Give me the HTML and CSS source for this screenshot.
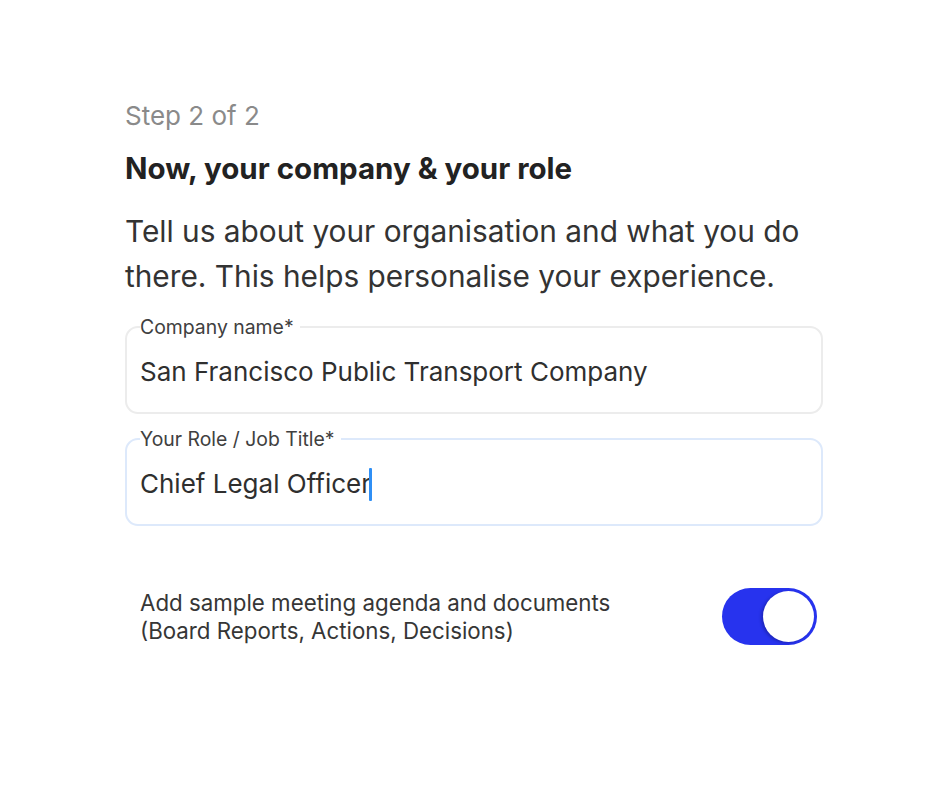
FILE: index.html
```html
<!DOCTYPE html>
<html lang="en">
<head>
  <meta charset="UTF-8" />
  <meta name="viewport" content="width=device-width, initial-scale=1" />
  <title>Onboarding - Step 2</title>
  <link rel="stylesheet" href="styles.css">
</head>
<body>
  <div class="onboarding">
    <div class="step">Step 2 of 2</div>
    <h1 class="title">Now, your company &amp; your role</h1>
    <p class="intro">Tell us about your organisation and what you do there. This helps personalise your experience.</p>

    <fieldset class="field">
      <legend>Company name*</legend>
      <div class="field-value">San Francisco Public Transport Company</div>
    </fieldset>

    <fieldset class="field field-active">
      <legend>Your Role / Job Title*</legend>
      <div class="field-value">Chief Legal Officer<span class="caret"></span></div>
    </fieldset>

    <div class="option-row">
      <div class="option-text">Add sample meeting agenda and documents<br>(Board Reports, Actions, Decisions)</div>
      <div class="toggle on"><span class="knob"></span></div>
    </div>
  </div>
</body>
</html>
```

FILE: styles.css
```css
/* Base */
body {
  margin: 0;
  background: #fff;
  font-family: Inter, "Noto Sans", sans-serif;
  color: #262626;
}

.onboarding {
  width: 698px;
  padding: 98px 0 0 125px;
}

.step {
  font-size: 26px;
  line-height: 36px;
  color: #8a8a8a;
}

.title {
  margin: 16px 0 0;
  font-size: 29.5px;
  line-height: 36px;
  font-weight: 700;
  color: #222;
}

.intro {
  margin: 23px 0 0;
  font-size: 29.8px;
  line-height: 45px;
  color: #333;
}

/* Outlined fields */
.field {
  margin: 17px 0 0;
  padding: 0 13px 22px;
  border: 2px solid #ececec;
  border-radius: 13px;
  min-width: 0;
}

.field + .field {
  margin-top: 14px;
}

.field legend {
  padding: 0 6px 0 0;
  font-size: 19.4px;
  line-height: 22px;
  color: #404040;
}

.field-active {
  border-color: #dde9fb;
}

.field-value {
  margin-top: 16px;
  font-size: 26px;
  line-height: 36px;
  color: #2f2f2f;
}

.caret {
  display: inline-block;
  width: 3px;
  height: 33px;
  margin-left: -2px;
  vertical-align: -8px;
  background: #2f8ff5;
  border-radius: 1px;
}

/* Sample data toggle */
.option-row {
  display: flex;
  align-items: center;
  justify-content: space-between;
  margin-top: 62px;
  padding: 0 6px 0 15px;
}

.option-text {
  font-size: 22.3px;
  line-height: 28px;
  color: #363636;
}

.toggle {
  position: relative;
  width: 95px;
  height: 57px;
  border-radius: 29px;
  background: #dcdcdc;
}

.toggle.on {
  background: #2733ee;
}

.toggle .knob {
  position: absolute;
  top: 3px;
  right: 3px;
  width: 51px;
  height: 51px;
  border-radius: 50%;
  background: #fff;
  box-shadow: -2px 1px 3px rgba(0, 0, 40, 0.25);
}
```
